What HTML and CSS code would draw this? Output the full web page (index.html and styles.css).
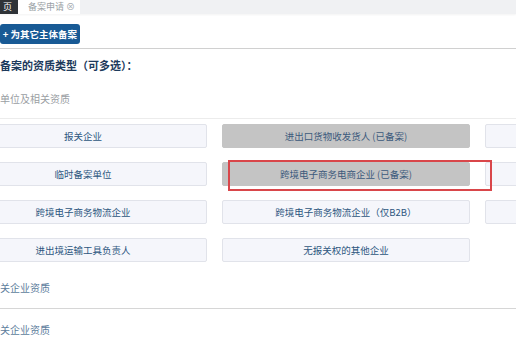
FILE: index.html
```html
<!DOCTYPE html>
<html>
<head>
  <title>备案申请</title>
  <link rel="stylesheet" href="styles.css">
</head>
<body>
  <div class="tabs">
    <div class="tab tab-home">页</div>
    <div class="tab tab-active">备案申请 <span class="tab-close">&#x2297;</span></div>
  </div>

  <div class="toolbar">
    <button class="btn-primary">+ 为其它主体备案</button>
  </div>

  <div class="section">
    <h3 class="title">备案的资质类型（可多选）：</h3>
    <div class="group-label">单位及相关资质</div>
  </div>

  <div class="choices">
    <div class="choice">报关企业</div>
    <div class="choice done">进出口货物收发货人 (已备案)</div>
    <div class="choice"></div>

    <div class="choice">临时备案单位</div>
    <div class="choice done marked">跨境电子商务电商企业 (已备案)</div>
    <div class="choice"></div>

    <div class="choice">跨境电子商务物流企业</div>
    <div class="choice">跨境电子商务物流企业（仅B2B）</div>
    <div class="choice"></div>

    <div class="choice">进出境运输工具负责人</div>
    <div class="choice">无报关权的其他企业</div>
  </div>

  <div class="group-label sub">关企业资质</div>
  <div class="group-label sub last">关企业资质</div>
</body>
</html>
```

FILE: styles.css
```css
body {
  margin: 0;
  font-family: "Noto Sans CJK SC", "Noto Sans", sans-serif;
  background: #fff;
  overflow: hidden;
}
.tabs {
  display: flex;
  height: 14px;
  background: #f0f1f3;
  box-shadow: 0 1px 2px rgba(0,0,0,0.05);
}
.tab {
  font-size: 9px;
  line-height: 14px;
}
.tab-home {
  background: #2f3338;
  color: #fff;
  width: 12px;
  padding-right: 6px;
  text-align: right;
}
.tab-active {
  background: #fff;
  color: #9a9fa5;
  width: 52px;
  padding-left: 10px;
}
.tab-close {
  color: #a5abb1;
}
.toolbar {
  padding: 10px 0 4px 0;
  border-bottom: 1px solid #d0d0d0;
}
.btn-primary {
  display: block;
  border: none;
  background: #185a95;
  color: #fff;
  font-family: inherit;
  font-size: 9.5px;
  height: 20px;
  width: 80px;
  padding: 0;
  border-radius: 3px;
  font-weight: bold;
}
.section {
  border-bottom: 1px solid #ececec;
  padding-bottom: 12px;
}
.title {
  margin: 0;
  padding-top: 7px;
  font-size: 11px;
  line-height: 18px;
  color: #1d3a5c;
}
.group-label {
  font-size: 10px;
  color: #9a9ea3;
  margin-top: 18px;
  line-height: 14px;
}
.choices {
  display: grid;
  grid-template-columns: 248px 248px 248px;
  column-gap: 15px;
  row-gap: 14px;
  margin-left: -41px;
  padding-top: 5px;
}
.choice {
  height: 22px;
  line-height: 22px;
  text-align: center;
  font-size: 9.5px;
  color: #2d5680;
  background: #f5f6fb;
  border: 1px solid #e1e3ea;
  border-radius: 2px;
  position: relative;
}
.choice.done {
  background: #c4c4c4;
  border-color: #c4c4c4;
  color: #3c5a7c;
}
.choice.marked {
  z-index: 1;
}
.choice.marked::after {
  content: "";
  position: absolute;
  left: 5px;
  top: -3px;
  width: 260px;
  height: 27px;
  border: 2px solid #d9464a;
}
.group-label.sub {
  color: #5d7d9c;
  margin-top: 19px;
  padding-bottom: 13px;
  border-bottom: 1px solid #d6d6d6;
}
.group-label.last {
  border-bottom: none;
  margin-top: 14px;
}
```
